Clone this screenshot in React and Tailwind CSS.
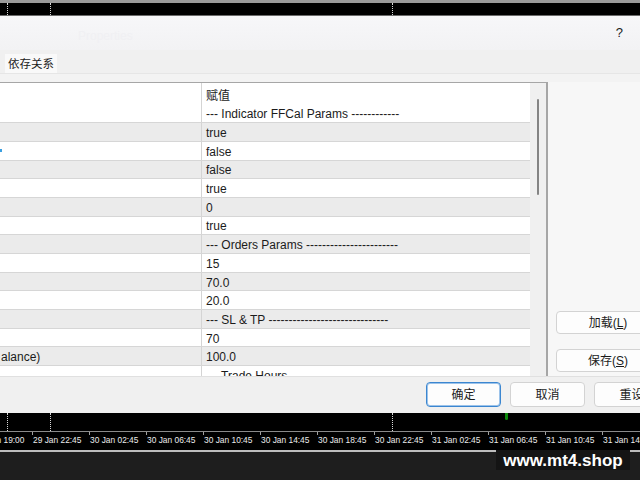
import React from 'react';

const font = { fontFamily: '"Liberation Sans", "Noto Sans CJK SC", sans-serif' };

const rows = [
  { value: '--- Indicator FFCal Params ------------', shade: false },
  { value: 'true', shade: true },
  { value: 'false', shade: false, mark: true },
  { value: 'false', shade: true },
  { value: 'true', shade: false },
  { value: '0', shade: true },
  { value: 'true', shade: false },
  { value: '--- Orders Params -----------------------', shade: true },
  { value: '15', shade: false },
  { value: '70.0', shade: true },
  { value: '20.0', shade: false },
  { value: '--- SL & TP ------------------------------', shade: true },
  { value: '70', shade: false },
  { value: '100.0', shade: true, name: 'alance)' },
  { value: '--- Trade Hours ----------------', shade: false },
];

const times = [
  '29 Jan 19:00',
  '29 Jan 22:45',
  '30 Jan 02:45',
  '30 Jan 06:45',
  '30 Jan 10:45',
  '30 Jan 14:45',
  '30 Jan 18:45',
  '30 Jan 22:45',
  '31 Jan 02:45',
  '31 Jan 06:45',
  '31 Jan 10:45',
  '31 Jan 14:45',
];

const Button = ({ children, primary }) => (
  <div
    className={`flex items-center justify-center h-[25px] w-[75px] shrink-0 rounded-[4px] bg-[#fdfdfd] text-[12px] text-[#1b1b1b] border ${
      primary ? 'border-[#3b86d0] ring-1 ring-inset ring-[#9cc3ea]' : 'border-[#d3d3d3]'
    }`}
  >
    {children}
  </div>
);

const GridLines = () => (
  <>
    <div className="absolute left-[7px] top-0 h-full border-l border-dotted border-[#d8d8d8]" />
    <div className="absolute left-[50px] top-0 h-full border-l border-dotted border-[#d8d8d8]" />
    <div className="absolute left-[392px] top-0 h-full border-l border-dotted border-[#d8d8d8]" />
  </>
);

export default function App() {
  return (
    <div className="relative w-[640px] h-[480px] overflow-hidden bg-[#1e1e1e] flex flex-col" style={font}>
      {/* chart strip above the dialog */}
      <div className="relative h-[16px] shrink-0 bg-black border-t-[3px] border-[#9a9a9a] border-b border-b-[#6a6a6a]">
        <GridLines />
      </div>

      {/* dialog */}
      <div className="w-[680px] h-[397px] shrink-0 bg-[#f0f0f0] flex flex-col">
        {/* title bar */}
        <div className="h-[34px] shrink-0 bg-gradient-to-b from-[#f7f7f9] to-[#f2f2f4] flex items-center">
          <span className="ml-[78px] mt-[6px] text-[12px] text-[#f0f0f3]">Properties</span>
          <span className="ml-auto mr-[57px] text-[13px] text-[#222]">?</span>
        </div>

        {/* tabs */}
        <div className="h-[24px] shrink-0 flex items-end border-b border-[#e6e6e6]">
          <div className="ml-[5px] h-[19px] px-[3px] pt-[3px] bg-[#f9f9f9] flex items-center text-[11.5px] text-[#1b1b1b]">依存关系</div>
        </div>

        <div className="h-[8px] shrink-0 bg-[#f3f3f3]" />

        {/* table + side buttons */}
        <div className="flex h-[294px] shrink-0">
          <div className="w-[548px] h-full shrink-0 flex border-t border-r-2 border-[#a6a6a6] bg-white">
            <div className="flex-1 h-full overflow-hidden flex flex-col text-[12px] text-[#1b1b1b]">
              <div className="h-[21.5px] shrink-0 flex">
                <div className="w-[202px] shrink-0 border-r border-[#d4d4d4]" />
                <div className="pl-[4px] pt-[4px]">赋值</div>
              </div>
              {rows.map((row, i) => (
                <div
                  key={i}
                  className={`h-[18.7px] shrink-0 flex items-stretch border-b border-[#d6d6d6] ${
                    row.shade ? 'bg-[#ebebeb]' : 'bg-white'
                  }`}
                >
                  <div className="relative w-[202px] shrink-0 border-r border-[#d4d4d4] flex items-center">
                    {row.mark && <div className="w-[2px] h-[3px] bg-[#3a9fe0]" />}
                    {row.name && <span className="pl-px pt-[2px]">{row.name}</span>}
                  </div>
                  <div className="pl-[4px] pt-[2px] flex items-center whitespace-nowrap">{row.value}</div>
                </div>
              ))}
            </div>
            {/* scrollbar */}
            <div className="w-[16px] h-full shrink-0 bg-[#f0f0f0] flex justify-center pt-[16px]">
              <div className="w-[2px] h-[96px] rounded-full bg-[#858585]" />
            </div>
          </div>

          <div className="flex-1 bg-[#f7f7f7] flex flex-col justify-end pl-[8px] pb-[4px] gap-[15px]">
            <div className="h-[23px] w-[104px] rounded-[4px] border border-[#d3d3d3] bg-[#fdfdfd] flex items-center justify-center text-[12px] text-[#1b1b1b]">
              加载(<span className="underline">L</span>)
            </div>
            <div className="h-[23px] w-[104px] rounded-[4px] border border-[#d3d3d3] bg-[#fdfdfd] flex items-center justify-center text-[12px] text-[#1b1b1b]">
              保存(<span className="underline">S</span>)
            </div>
          </div>
        </div>

        {/* bottom buttons */}
        <div className="flex-1 flex justify-end items-start pt-[5px] pr-[11px] gap-[9px] border-t border-[#e0e0e0]">
          <Button primary>确定</Button>
          <Button>取消</Button>
          <Button>重设</Button>
        </div>
      </div>

      {/* chart below the dialog */}
      <div className="relative h-[18px] shrink-0 bg-black">
        <GridLines />
        <div className="absolute left-[505px] top-0 w-[3px] h-[7px] rounded-b-sm bg-[#0c8a0c]" />
      </div>
      <div className="h-[19px] shrink-0 bg-black border-t border-[#8a8a8a] overflow-hidden">
        <div className="flex ml-[-25px]">
          {times.map((t, i) => (
            <div key={i} className="w-[57px] shrink-0 flex flex-col">
              <div className="w-px h-[3px] bg-[#a0a0a0]" />
              <span className="pl-px text-[8.4px] leading-[10px] text-[#ececec] whitespace-nowrap">{t}</span>
            </div>
          ))}
        </div>
      </div>
      <div className="h-[2px] shrink-0 bg-[#bdbdbd]" />
      <div className="flex-1 bg-[#1e1e1e]" />

      {/* watermark */}
      <div className="absolute left-[496px] top-[450px] w-[134px] h-[20px] bg-[#141414] flex items-center justify-center">
        <span className="text-[17px] font-bold text-white leading-none">www.mt4.shop</span>
      </div>
    </div>
  );
}
